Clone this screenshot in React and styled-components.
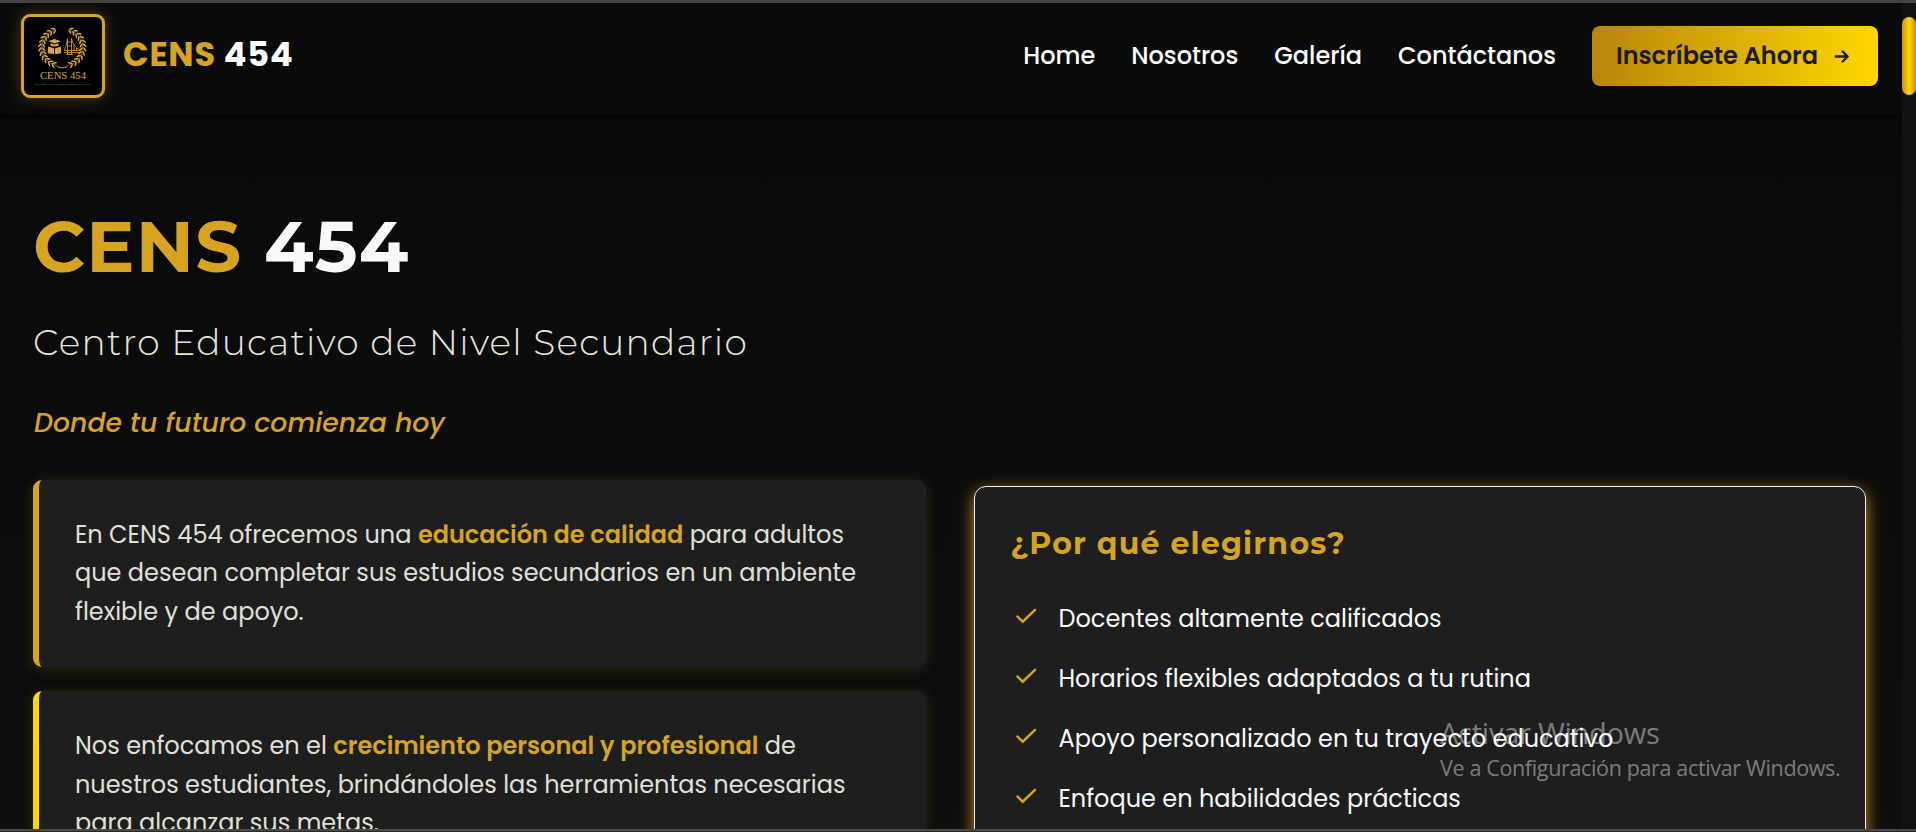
import React from "react";
import styled, { createGlobalStyle } from "styled-components";

const gold = "#d6a420";

const GlobalStyle = createGlobalStyle`
  * { box-sizing: border-box; margin: 0; padding: 0; }
  body { margin: 0; background: #0a0a0a; color: #fff; font-family: Poppins, Inter, "Liberation Sans", sans-serif; overflow: hidden; }
`;

const Window = styled.div`
  position: relative;
  display: flex;
  flex-direction: column;
  width: 100%;
  height: 832px;
  overflow: hidden;
  background: linear-gradient(180deg, #090909, #0e0e0e);
`;
const TopEdge = styled.div`flex: none; height: 3px; background: #444;`;
const BottomEdge = styled.div`flex: none; height: 3px; background: #4b4848; border-bottom: 1px solid #2b2727;`;
const Viewport = styled.div`flex: 1; min-height: 0; display: flex;`;
const Page = styled.div`flex: 1; min-width: 0; overflow: hidden;`;
const ScrollTrack = styled.div`flex: none; width: 14px; padding-top: 14px; background: #121212;`;
const ScrollThumb = styled.div`height: 78px; border-radius: 7px; background: linear-gradient(90deg, #c8920c, #ffd700 50%, #c8920c);`;

const Header = styled.header`
  position: relative;
  display: flex;
  justify-content: space-between;
  align-items: center;
  height: 111px;
  padding: 11px 24px 16px 21px;
  background: #0a0a0a;
  box-shadow: 0 4px 12px rgba(0, 0, 0, 0.6);
`;
const Brand = styled.a`display: flex; align-items: center; gap: 18px;`;
const Emblem = styled.div`
  width: 84px;
  height: 84px;
  border: 3px solid ${gold};
  border-radius: 9px;
  background: #000;
  box-shadow: 0 0 15px rgba(218, 165, 32, 0.3);
  overflow: hidden;
`;
const BrandName = styled.span`
  padding-bottom: 3px;
  font-size: 33.6px;
  line-height: 40px;
  font-weight: 700;
  letter-spacing: 0.8px;
  white-space: nowrap;
`;
const Gold = styled.span`color: ${gold};`;
const Nav = styled.nav`display: flex; align-items: center; gap: 36px;`;
const NavLink = styled.a`font-size: 24px; line-height: 36px; font-weight: 500;`;
const Cta = styled.button`
  display: flex;
  align-items: center;
  justify-content: space-between;
  width: 286px;
  height: 60px;
  padding: 0 29px 0 24px;
  border: 0;
  border-radius: 8px;
  background: linear-gradient(90deg, #b8860b, #ffd700);
  color: #1c1c1c;
  font: inherit;
  font-size: 24px;
  line-height: 36px;
  font-weight: ${(p) => p.$weight};
  white-space: nowrap;
`;

const Main = styled.main`padding: 90px 36px 0 33px;`;
const Title = styled.h1`
  font-family: Montserrat, Inter, sans-serif;
  font-size: 72px;
  line-height: 84px;
  font-weight: 700;
  letter-spacing: 1.2px;
  color: #f8f9fa;
`;
const Subtitle = styled.h2`
  margin-top: 30px;
  font-family: Montserrat, Inter, sans-serif;
  font-size: 36px;
  line-height: 48px;
  font-weight: 300;
  letter-spacing: 1.2px;
  color: #e5e5df;
`;
const Tagline = styled.p`
  margin-top: 37px;
  padding-left: 1px;
  font-size: 26.75px;
  line-height: 40px;
  font-weight: 500;
  font-style: italic;
  color: ${gold};
`;
const Columns = styled.div`
  display: grid;
  grid-template-columns: repeat(2, minmax(0, 1fr));
  align-items: start;
  gap: 48px;
  margin-top: 37px;
`;
const Stack = styled.div`display: grid; gap: 24px;`;
const InfoCard = styled.article`
  padding: 36px;
  border-left: 6px solid ${(p) => p.$accent};
  border-radius: 9px;
  background: #1e1e1e;
  box-shadow: 0 2px 14px rgba(218, 165, 32, 0.17);
  font-size: 24px;
  line-height: 38.4px;
  color: #e0e0da;
`;
const Strong = styled.strong`font-weight: 600; color: ${gold};`;
const WhyCard = styled.section`
  margin-top: 6px;
  height: 420px;
  padding: 36px;
  border: 1px solid #f0f0ea;
  border-radius: 12px;
  background: #1e1e1e;
  box-shadow: 0 5px 16px rgba(218, 165, 32, 0.85);
`;
const WhyTitle = styled.h3`
  margin-bottom: 23px;
  font-family: Montserrat, Inter, sans-serif;
  font-size: 30px;
  line-height: 42px;
  font-weight: 700;
  letter-spacing: 1.2px;
  color: ${gold};
`;
const List = styled.ul`list-style: none;`;
const Reason = styled.li`
  display: flex;
  align-items: center;
  height: 60px;
  padding-left: 5px;
  gap: 22px;
  font-size: 24px;
  color: #f8f9fa;
  white-space: nowrap;
  svg { flex: none; margin-top: -4px; }
`;
const Watermark = styled.div`
  position: absolute;
  left: 1440px;
  top: 715px;
  font-family: "Segoe UI", "Open Sans", sans-serif;
  color: rgba(255, 255, 255, 0.43);
  white-space: nowrap;
`;
const MarkTitle = styled.div`font-size: 29px; line-height: 36px; letter-spacing: -0.245px;`;
const MarkText = styled.div`font-size: 21.5px; line-height: 34px; letter-spacing: -0.35px;`;

const crestGold = "#d9a441";
const leafAngles = [-114, -126, -138, -150, -162, -174, -186, -198, -210, -222, -234, -246];

function Branch() {
  return (
    <g fill={crestGold}>
      <path d="M30 13.300A20.700 18.800 0 0 0 32 48.500Q37 52 42.500 50.500" fill="none" stroke={crestGold} strokeWidth="0.6" />
      {leafAngles.map((a) => {
        const r = (a * Math.PI) / 180;
        return [-1, 1].map((side) => {
          const x = 38.3 + (20.7 + side * 1.9) * Math.cos(r);
          const y = 30.4 + (18.8 + side * 1.7) * Math.sin(r);
          return <ellipse key={`${a}${side}`} cx={x} cy={y} rx="2.5" ry="0.85" transform={`rotate(${a + 90 + side * 36} ${x} ${y})`} />;
        });
      })}
    </g>
  );
}

function Crest() {
  return (
    <svg width="78" height="78" viewBox="0 0 78 78">
      <Branch />
      <g transform="translate(76.600 0) scale(-1 1)"><Branch /></g>
      <g fill={crestGold}>
        <path d="M24 24.300l6.500-2.300 6.500 2.300-6.500 2.200zM26.500 26.300v2.500q4 1.500 8 0v-2.500l-4 1.300z" />
        <path d="M24 29.500l6 1.700v6l-6-1zM37 29.500l-6 1.700v6l6-1z" />
      </g>
      <path
        d="M40 35.500h16M40 33.500h16M43.500 21.500v16M47.500 21.500v16M43.500 25h4M43.500 29h4M42 37.500h7M43.500 22q-1 8-3.500 11M47.500 22q2 8 8.500 11M50 27v7M52.500 31v3"
        fill="none"
        stroke={crestGold}
        strokeWidth="0.8"
      />
      <text x="16" y="62" textLength="46" lengthAdjust="spacingAndGlyphs" fontFamily="Liberation Serif" fontSize="11" fill={crestGold}>CENS 454</text>
      <text x="11" y="68" textLength="56" lengthAdjust="spacingAndGlyphs" fontFamily="Liberation Serif" fontSize="2.800" fill="#b58a35">DONDE TU FUTURO COMIENZA HOY</text>
    </svg>
  );
}

const Arrow = () => (
  <svg width="15" height="13" viewBox="0 0 15 13" fill="none" stroke="#1c1c1c" strokeWidth="2.400" strokeLinecap="round" strokeLinejoin="round">
    <path d="M1.800 6.500H13.300M8.700 1.500l4.900 5-4.900 5" />
  </svg>
);
const Check = () => (
  <svg width="21" height="16" viewBox="0 0 21 16" fill="none" stroke={gold} strokeWidth="2.400">
    <path d="M0.800 7.800L6.700 13.700 19.800 1.200" />
  </svg>
);

const links = ["Home", "Nosotros", "Galería", "Contáctanos"];
const reasons = [
  "Docentes altamente calificados",
  "Horarios flexibles adaptados a tu rutina",
  "Apoyo personalizado en tu trayecto educativo",
  "Enfoque en habilidades prácticas",
];

export default function App() {
  return (
    <Window>
      <GlobalStyle />
      <TopEdge />
      <Viewport>
        <Page>
          <Header>
            <Brand>
              <Emblem><Crest /></Emblem>
              <BrandName><Gold>CENS</Gold> 454</BrandName>
            </Brand>
            <Nav>
              {links.map((t) => <NavLink key={t}>{t}</NavLink>)}
              <Cta $weight={600}>Inscríbete Ahora<Arrow /></Cta>
            </Nav>
          </Header>
          <Main>
            <Title><Gold>CENS</Gold> 454</Title>
            <Subtitle>Centro Educativo de Nivel Secundario</Subtitle>
            <Tagline>Donde tu futuro comienza hoy</Tagline>
            <Columns>
              <Stack>
                <InfoCard $accent={gold}>
                  En CENS 454 ofrecemos una <Strong>educación de calidad</Strong> para adultos que desean completar sus estudios secundarios en un ambiente flexible y de apoyo.
                </InfoCard>
                <InfoCard $accent="#ffd700">
                  Nos enfocamos en el <Strong>crecimiento personal y profesional</Strong> de nuestros estudiantes, brindándoles las herramientas necesarias para alcanzar sus metas.
                </InfoCard>
              </Stack>
              <WhyCard>
                <WhyTitle>¿Por qué elegirnos?</WhyTitle>
                <List>{reasons.map((t) => <Reason key={t}><Check />{t}</Reason>)}</List>
              </WhyCard>
            </Columns>
          </Main>
        </Page>
        <ScrollTrack><ScrollThumb /></ScrollTrack>
      </Viewport>
      <BottomEdge />
      <Watermark>
        <MarkTitle>Activar Windows</MarkTitle>
        <MarkText>Ve a Configuración para activar Windows.</MarkText>
      </Watermark>
    </Window>
  );
}
